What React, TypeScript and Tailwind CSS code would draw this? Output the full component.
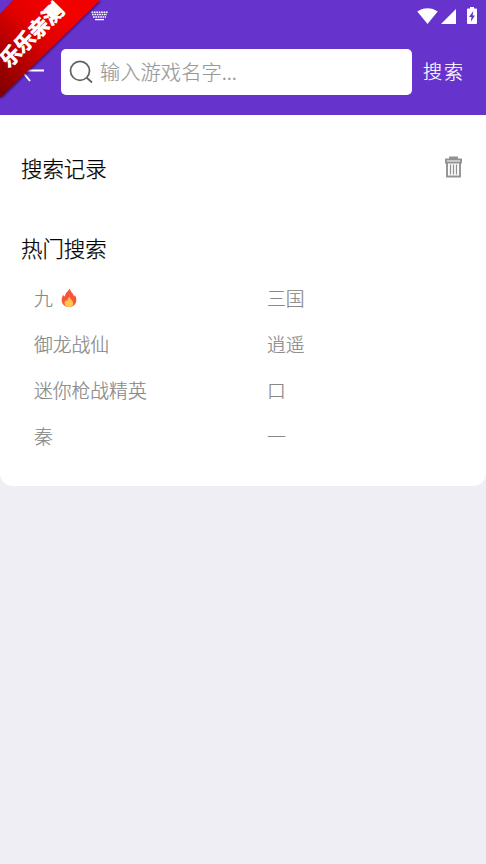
import React from "react";

const HOT: string[] = ["九", "三国", "御龙战仙", "逍遥", "迷你枪战精英", "口", "秦", "一"];

function Flame() {
  return (
    <svg width="16" height="20" viewBox="0 0 16 20" className="ml-[8px]">
      <path d="M8.8 0.5C9.200 4 13 5.500 13 8.500C14 8 13.800 7 13.500 6.500C15 8.500 15.500 10.500 15.300 12.800C15 16.500 12 19 8 19C4 19 .8 16.300.7 12.500C.6 10 1.500 8.500 2 6.800C2.700 8 3.300 8.300 4 8.600C4 5 7 3.500 8.800.5Z" fill="#f9553a" />
      <path d="M8.500 8.500C8.700 11 12 12.300 12.200 15C12.400 17.500 10.500 19 8 19C5.300 19 3.400 17.400 3.600 15C3.700 13.500 4.500 12.600 5.100 12C5.300 12.800 5.700 13.100 6.200 13.300C6.100 11.500 7.300 10.500 8.500 8.500Z" fill="#ffc64f" />
    </svg>
  );
}

function Ribbon() {
  return (
    <svg width="110" height="110" viewBox="0 0 110 110" className="absolute left-0 top-0">
      <defs>
        <linearGradient id="band" gradientUnits="userSpaceOnUse" x1="0" y1="98" x2="100" y2="0">
          <stop offset="0" stopColor="#7a0000" />
          <stop offset="0.3" stopColor="#b50000" />
          <stop offset="0.5" stopColor="#e00000" />
          <stop offset="0.75" stopColor="#f40505" />
          <stop offset="1" stopColor="#f00000" />
        </linearGradient>
        <filter id="soft" x="-10%" y="-10%" width="130%" height="130%">
          <feDropShadow dx="0.8" dy="1" stdDeviation="1" floodColor="#210030" floodOpacity="0.75" />
        </filter>
      </defs>
      <path d="M13 0H100L0 98V14Z" fill="url(#band)" filter="url(#soft)" />
      <text
        transform="translate(32 35) rotate(-45)"
        x="0"
        y="7"
        textAnchor="middle"
        fontSize="20"
        fontWeight="500"
        fill="#fff"
        stroke="#fff"
        strokeWidth="1.200"
        className="font-['Noto_Sans_CJK_SC',sans-serif]"
      >
        乐乐亲测
      </text>
    </svg>
  );
}

function StatusBar() {
  return (
    <div className="flex h-[32px] items-center pl-[91px] pr-[9px]">
      <svg width="17" height="10" viewBox="0 0 17 10" fill="none" stroke="#fff" strokeWidth="1.500">
        <path d="M.5 1.200H17" strokeDasharray="1.700 .7" />
        <path d="M1 3.600H16" strokeDasharray="1.700 .7" />
        <path d="M2 6H15" strokeDasharray="1.700 .7" />
        <path d="M4 8.600H13" strokeWidth="1.300" />
      </svg>
      <div className="ml-auto flex items-center">
        <svg width="21" height="16" viewBox="0 0 21 16">
          <path d="M.3 3.500C6 -1 15 -1 20.700 3.500L10.500 16Z" fill="#fff" />
        </svg>
        <svg width="15" height="16" viewBox="0 0 15 16" className="ml-[3px]">
          <path d="M0 16L15 1V16Z" fill="#fff" />
        </svg>
        <svg width="10" height="17" viewBox="0 0 10 17" className="-mt-[1px] ml-[11px]">
          <path d="M3 0H7V1.500H9Q10 1.500 10 2.500V16Q10 17 9 17H1Q0 17 0 16V2.500Q0 1.500 1 1.500H3Z" fill="#fff" />
          <path d="M6.300 4L2 10H4.500L3.800 14.800L8 8.500H5.700Z" fill="#6633cc" />
        </svg>
      </div>
    </div>
  );
}

export default function App() {
  return (
    <div className="relative h-[864px] w-[486px] overflow-hidden bg-[#efeef4] font-['Noto_Sans_CJK_SC',sans-serif] font-light">
      <header className="h-[115px] bg-[#6633cc]">
        <StatusBar />
        <div className="mt-[17px] flex h-[46px] items-center">
          <svg width="24" height="20" viewBox="0 0 24 20" fill="none" stroke="#fff" strokeWidth="2" className="ml-[20px]">
            <path d="M24 8.500H2M1 1L2 9L10 19" />
          </svg>
          <div className="ml-[17px] flex h-[46px] w-[351px] items-center rounded-[5px] bg-white">
            <svg width="24" height="24" viewBox="0 0 24 24" fill="none" stroke="#616161" strokeWidth="1.700" className="ml-[8px]">
              <circle cx="11" cy="10.800" r="9.500" />
              <path d="M17.500 17.500L23 22.500" />
            </svg>
            <span className="-mt-[2px] ml-[7px] text-[20.300px] leading-[46px] text-[#999999] [-webkit-text-stroke:0.2px_#999999]">输入游戏名字...</span>
          </div>
          <span className="-mt-[2px] ml-[11px] whitespace-nowrap text-[19px] tracking-[2px] text-white [-webkit-text-stroke:0.2px_#ffffff]">搜索</span>
        </div>
      </header>
      <main className="h-[371px] rounded-b-[13px] bg-white pt-[37px]">
        <div className="flex h-[32px] items-center justify-between pl-[21px] pr-[24px]">
          <h2 className="-mt-[1px] text-[21.400px] font-light leading-[32px] text-black [-webkit-text-stroke:0.25px_#000000]">搜索记录</h2>
          <svg width="17" height="22" viewBox="0 0 17 22" fill="none" stroke="#929292" strokeWidth="1.900" className="-mt-[2px]">
            <path d="M5 4V1.500H12V4M1 3.500H16V6.500H1ZM2 6.500V20.500H15V6.500" />
            <path d="M5.500 8.500V18.500M8.500 8.500V18.500M11.500 8.500V18.500" strokeWidth="1.300" />
          </svg>
        </div>
        <h2 className="mt-[48px] pl-[21px] text-[21.400px] font-light leading-[32px] text-black [-webkit-text-stroke:0.25px_#000000]">热门搜索</h2>
        <div className="mt-[11px] grid grid-cols-[233px_1fr] pl-[34px]">
          {HOT.map((name, i) => (
            <div key={name} className="flex h-[46px] items-center text-[18.800px] leading-[46px] text-[#888888] [-webkit-text-stroke:0.2px_#888888]">
              {name}
              {i === 0 && <Flame />}
            </div>
          ))}
        </div>
      </main>
      <Ribbon />
    </div>
  );
}
